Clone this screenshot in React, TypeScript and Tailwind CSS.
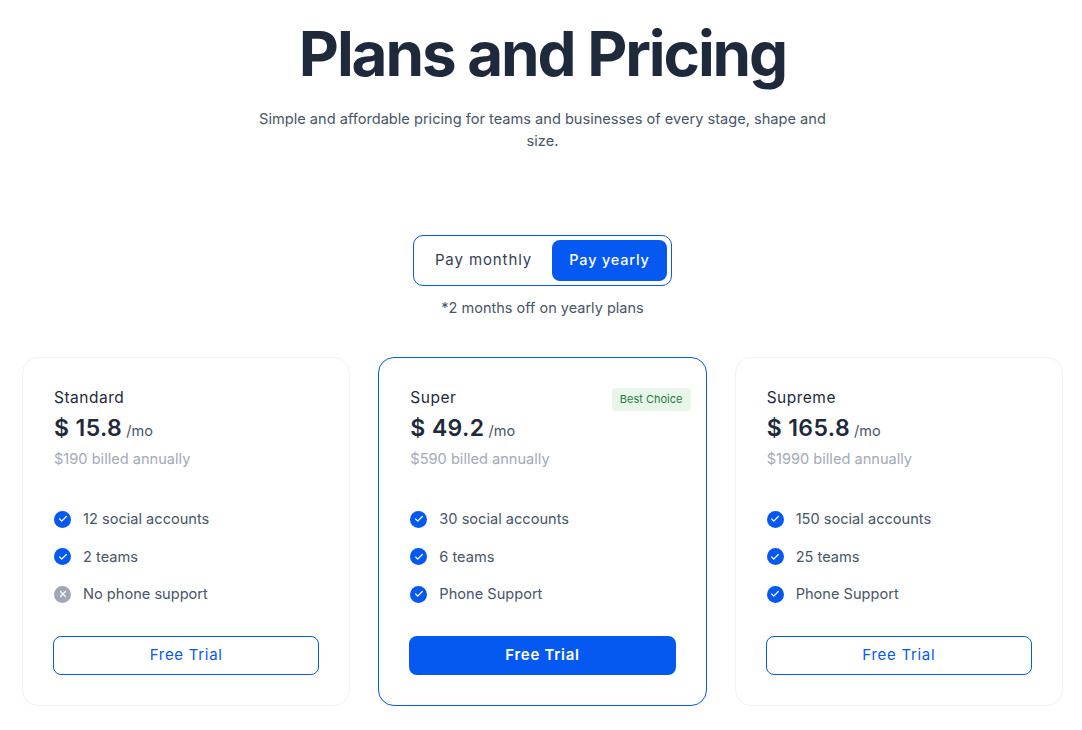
import { Check, X } from 'lucide-react'

const plans = [
  {
    name: 'Standard',
    price: '15.8',
    billed: '$190 billed annually',
    features: [
      { label: '12 social accounts', on: true },
      { label: '2 teams', on: true },
      { label: 'No phone support', on: false },
    ],
  },
  {
    name: 'Super',
    price: '49.2',
    billed: '$590 billed annually',
    featured: true,
    features: [
      { label: '30 social accounts', on: true },
      { label: '6 teams', on: true },
      { label: 'Phone Support', on: true },
    ],
  },
  {
    name: 'Supreme',
    price: '165.8',
    billed: '$1990 billed annually',
    features: [
      { label: '150 social accounts', on: true },
      { label: '25 teams', on: true },
      { label: 'Phone Support', on: true },
    ],
  },
]

function PlanCard({ plan }: { plan: (typeof plans)[number] }) {
  return (
    <div
      className={
        plan.featured
          ? 'relative h-[349px] rounded-[16px] border border-[#0558f0] bg-white px-[30px] pt-[30px]'
          : 'relative h-[349px] rounded-[16px] border border-[#f1f2f4] bg-white px-[30px] pt-[30px]'
      }
    >
      {plan.featured && (
        <span className="absolute right-[15px] top-[30px] flex h-[23px] w-[79px] items-center justify-center rounded-[4px] bg-[#e8f6ea] text-[11px] text-[#1f7a45]">
          Best Choice
        </span>
      )}
      <h3 className="pl-px text-[15.5px] leading-[20px] tracking-[0.5px] text-[#1e293b]">{plan.name}</h3>
      <div className="mt-[5px] flex items-baseline pl-px leading-[30px] text-[#1e293b]">
        <span className="text-[23px] font-semibold tracking-[0.4px]">$ {plan.price}</span>
        <span className="ml-[4px] text-[14.5px] text-[#475569]">/mo</span>
      </div>
      <p className="mt-[2px] pl-px text-[14.6px] leading-[22px] text-[#a3a9b8]">{plan.billed}</p>
      <ul className="mt-[39px] flex flex-col gap-[15.5px]">
        {plan.features.map((f) => (
          <li key={f.label} className="flex h-[22px] items-center gap-[12px] pl-px text-[14.6px] text-[#475569]">
            <span
              className={
                f.on
                  ? 'mb-[2px] flex h-[17px] w-[17px] items-center justify-center rounded-full bg-[#0558f0]'
                  : 'mb-[2px] flex h-[17px] w-[17px] items-center justify-center rounded-full bg-[#a0a6b4]'
              }
            >
              {f.on ? (
                <Check className="h-[10px] w-[10px] text-white" strokeWidth={3} />
              ) : (
                <X className="h-[10px] w-[10px] text-white" strokeWidth={3} />
              )}
            </span>
            {f.label}
          </li>
        ))}
      </ul>
      <button
        className={
          plan.featured
            ? 'mt-[30px] h-[39px] w-full rounded-[8px] bg-[#0558f0] pb-px text-[15px] font-semibold tracking-[0.7px] text-white'
            : 'mt-[30px] h-[39px] w-full rounded-[8px] border border-[#0558f0] bg-white pb-px text-[15px] font-normal tracking-[0.7px] text-[#0558f0]'
        }
      >
        Free Trial
      </button>
    </div>
  )
}

export default function App() {
  return (
    <div className="h-[730px] overflow-hidden bg-white pl-[22px] pr-[19px] font-['Inter',sans-serif]">
      <div className="flex flex-col items-center">
        <h1 className="mt-[16px] text-[62px] font-bold leading-[76px] tracking-[-2.1px] text-[#1e293b]">
          Plans and Pricing
        </h1>
        <p className="mt-[16px] w-[590px] text-center text-[14.6px] leading-[22px] text-[#475569]">
          Simple and affordable pricing for teams and businesses of every stage, shape and size.
        </p>
        <div className="mt-[83px] flex h-[51px] w-[259px] items-center justify-between rounded-[10px] border border-[#0558f0] p-[4px]">
          <button className="flex-1 pr-[3px] text-[15px] font-normal tracking-[0.9px] text-[#334155]">Pay monthly</button>
          <button className="h-[41px] w-[115px] rounded-[8px] bg-[#0558f0] pb-[2px] text-[14.5px] font-medium tracking-[0.8px] text-white">
            Pay yearly
          </button>
        </div>
        <p className="mt-[11px] text-[14.5px] leading-[22px] text-[#475569]">*2 months off on yearly plans</p>
      </div>
      <div className="mt-[38px] grid grid-cols-3 gap-[28px]">
        {plans.map((p) => (
          <PlanCard key={p.name} plan={p} />
        ))}
      </div>
    </div>
  )
}
